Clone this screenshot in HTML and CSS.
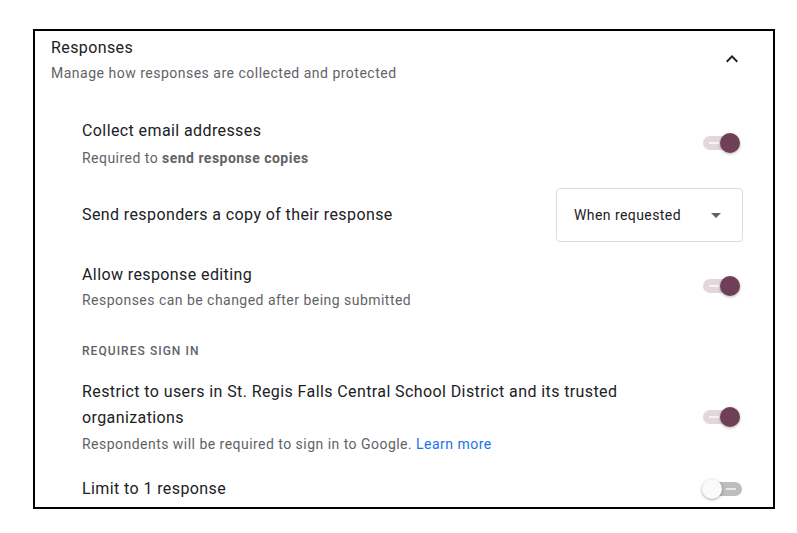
FILE: index.html
```html
<!DOCTYPE html>
<html lang="en">
<head>
  <meta charset="UTF-8">
  <title>Responses settings</title>
  <link rel="stylesheet" href="styles.css">
</head>
<body>

  <div class="card">
    <div class="card-header">
      <div>
        <div class="card-title">Responses</div>
        <div class="card-sub">Manage how responses are collected and protected</div>
      </div>
      <svg class="chevron" width="24" height="24" viewBox="0 0 24 24">
        <path d="M7.4 15.4L12 10.8l4.6 4.6L18 14l-6-6-6 6z" fill="#202124"/>
      </svg>
    </div>

    <div class="settings">
      <div class="row row-first">
        <div class="text">
          <div class="label">Collect email addresses</div>
          <div class="hint hint-wide">Required to <b>send response copies</b></div>
        </div>
        <div class="switch on"><span class="track"></span><span class="thumb"></span></div>
      </div>

      <div class="row row-select">
        <div class="text">
          <div class="label">Send responders a copy of their response</div>
        </div>
        <div class="select">
          <span>When requested</span>
          <span class="caret"></span>
        </div>
      </div>

      <div class="row row-edit">
        <div class="text">
          <div class="label">Allow response editing</div>
          <div class="hint">Responses can be changed after being submitted</div>
        </div>
        <div class="switch on"><span class="track"></span><span class="thumb"></span></div>
      </div>

      <div class="section">Requires sign in</div>

      <div class="row row-signin">
        <div class="text">
          <div class="label">Restrict to users in St. Regis Falls Central School District and its trusted organizations</div>
          <div class="hint">Respondents will be required to sign in to Google. <a href="#">Learn more</a></div>
        </div>
        <div class="switch on"><span class="track"></span><span class="thumb"></span></div>
      </div>

      <div class="row row-limit">
        <div class="text">
          <div class="label">Limit to 1 response</div>
        </div>
        <div class="switch"><span class="track"></span><span class="thumb"></span></div>
      </div>
    </div>
  </div>

</body>
</html>
```

FILE: styles.css
```css
* {
  box-sizing: border-box;
}

body {
  font-family: Roboto, "Liberation Sans", Arial, sans-serif;
  margin: 0;
  padding: 29px 0 0 33px;
  background: #fff;
  color: #202124;
}

.card {
  width: 742px;
  height: 480px;
  border: 2px solid #000;
  overflow: hidden;
  padding: 5px 30px 0 16px;
}

.card-header {
  display: flex;
  justify-content: space-between;
  align-items: flex-start;
}

.card-title {
  font-size: 16px;
  line-height: 24px;
  letter-spacing: 0.4px;
}

.card-sub {
  font-size: 14px;
  line-height: 20px;
  margin-top: 3px;
  letter-spacing: 0.5px;
  color: #5f6368;
}

.chevron {
  margin-top: 11px;
  margin-right: -1px;
}

.settings {
  padding-left: 31px;
}

.row {
  display: flex;
  align-items: center;
  justify-content: space-between;
  margin-top: 21px;
}

.row-first {
  margin-top: 35px;
}

.row-select,
.row-edit,
.row-signin {
  margin-top: 20px;
}

.row-limit {
  margin-top: 22px;
}

.text {
  max-width: 570px;
}

.label {
  font-size: 16px;
  line-height: 26px;
  letter-spacing: 0.4px;
}

.hint {
  font-size: 14px;
  line-height: 20px;
  margin-top: 2px;
  letter-spacing: 0.47px;
  color: #5f6368;
}

.hint-wide {
  margin-top: 4px;
}

.row-signin .hint {
  margin-top: 3px;
}

.hint b {
  font-weight: 700;
}

.hint a {
  color: #1a73e8;
  text-decoration: none;
}

.section {
  margin-top: 33px;
  font-size: 12px;
  line-height: 16px;
  font-weight: 500;
  letter-spacing: 1.05px;
  text-transform: uppercase;
  color: #5f6368;
}

.select {
  width: 187px;
  height: 54px;
  border: 1px solid #dadce0;
  border-radius: 4px;
  display: flex;
  align-items: center;
  justify-content: space-between;
  padding: 0 21px 0 17px;
  font-size: 14px;
  letter-spacing: 0.43px;
  color: #202124;
}

.caret {
  width: 0;
  height: 0;
  border-left: 5px solid transparent;
  border-right: 5px solid transparent;
  border-top: 5px solid #5f6368;
}

.switch {
  position: relative;
  width: 40px;
  height: 20px;
  margin-right: 1px;
}

.switch .track {
  position: absolute;
  left: 4px;
  top: 3px;
  width: 36px;
  height: 14px;
  border-radius: 7px;
  background: #bdbdbd;
}

.switch .track::after {
  content: "";
  position: absolute;
  right: 6px;
  top: 6px;
  width: 10px;
  height: 2px;
  background: #e8e8e8;
}

.switch .thumb {
  position: absolute;
  left: 0;
  top: 0;
  width: 20px;
  height: 20px;
  border-radius: 50%;
  background: #fafafa;
  box-shadow: 0 1px 3px rgba(0, 0, 0, 0.35);
}

.switch.on .track {
  left: 1px;
  width: 35px;
  background: #e3d6dc;
}

.switch.on .track::after {
  left: 6px;
  right: auto;
  background: #f7f2f4;
}

.switch.on .thumb {
  left: 18px;
  background: #6f3e57;
  box-shadow: 0 1px 3px rgba(0, 0, 0, 0.3);
}
```
